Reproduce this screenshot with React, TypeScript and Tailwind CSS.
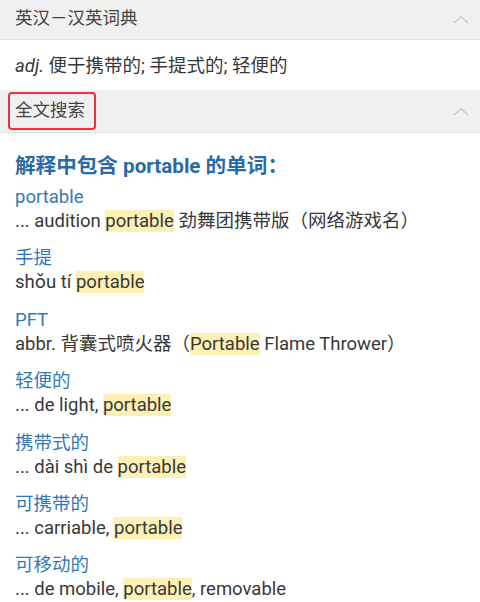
const font = { fontFamily: 'Roboto, "Noto Sans CJK SC", sans-serif' }

function Chevron() {
  return (
    <svg width="16" height="9" viewBox="0 0 16 9" className="text-[#c8c8c8]">
      <path d="M1 8 L8 1.5 L15 8" fill="none" stroke="currentColor" strokeWidth="1.2" />
    </svg>
  )
}

function Hl({ children }: { children: React.ReactNode }) {
  return <span className="bg-[#fdf0b4]">{children}</span>
}

const items: { word: string; desc: React.ReactNode }[] = [
  { word: 'portable', desc: <>... audition <Hl>portable</Hl> 劲舞团携带版（网络游戏名）</> },
  { word: '手提', desc: <>shǒu tí <Hl>portable</Hl></> },
  { word: 'PFT', desc: <>abbr. 背囊式喷火器（<Hl>Portable</Hl> Flame Thrower）</> },
  { word: '轻便的', desc: <>... de light, <Hl>portable</Hl></> },
  { word: '携带式的', desc: <>... dài shì de <Hl>portable</Hl></> },
  { word: '可携带的', desc: <>... carriable, <Hl>portable</Hl></> },
  { word: '可移动的', desc: <>... de mobile, <Hl>portable</Hl>, removable</> },
]

export default function App() {
  return (
    <div className="w-[480px] h-[602px] overflow-hidden bg-white text-[#383838]" style={font}>
      <div className="h-10 bg-[#f0f0f0] border-b border-[#e2e2e2] flex items-center justify-between pl-[15px] pr-[11px]">
        <span className="text-[17.5px] text-[#444] leading-none -mt-[2px]">英汉－汉英词典</span>
        <Chevron />
      </div>
      <div className="h-[50px] flex items-center pl-[15px] pt-[2px]">
        <span className="text-[18.5px] leading-none">
          <i>adj.</i> 便于携带的; 手提式的; 轻便的
        </span>
      </div>
      <div className="h-[43px] bg-[#f0f0f0] border-b border-[#e2e2e2] flex items-center justify-between pl-[8px] pr-[11px]">
        <span className="h-[38px] w-[88px] border-2 border-[#e8323c] rounded-[4px] flex items-center pl-[5px] text-[17.5px] text-[#444] leading-none">
          全文搜索
        </span>
        <Chevron />
      </div>
      <div className="pl-[15px] pt-[19px]">
        <div className="h-7 flex items-center text-[20.6px] font-bold text-[#2a6aa5] leading-none">
          解释中包含 portable 的单词：
        </div>
        <div className="mt-[5px] flex flex-col gap-[13.4px]">
          {items.map((it) => (
            <div key={it.word} className="text-[18.5px]">
              <div className="h-6 leading-6 text-[#3479b5]">{it.word}</div>
              <div className="h-6 leading-6 whitespace-nowrap">{it.desc}</div>
            </div>
          ))}
        </div>
      </div>
    </div>
  )
}
